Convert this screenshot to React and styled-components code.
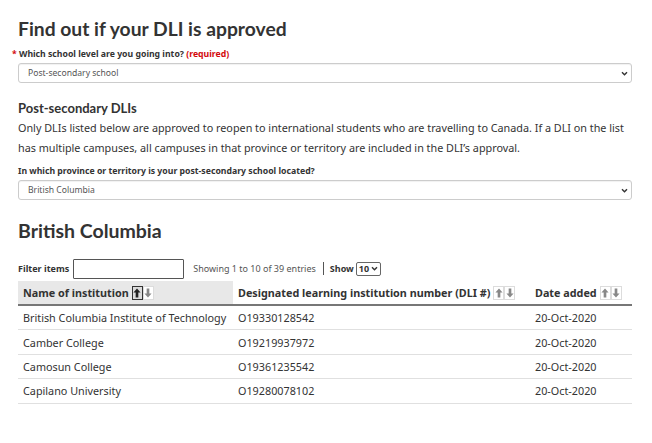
import React from "react";
import styled, { createGlobalStyle } from "styled-components";

const GlobalStyle = createGlobalStyle`
  body {
    margin: 0;
    background: #ffffff;
    font-family: "Noto Sans", "Open Sans", sans-serif;
    color: #333333;
  }
`;

const rows = [
  ["British Columbia Institute of Technology", "O19330128542", "20-Oct-2020"],
  ["Camber College", "O19219937972", "20-Oct-2020"],
  ["Camosun College", "O19361235542", "20-Oct-2020"],
  ["Capilano University", "O19280078102", "20-Oct-2020"],
];

function SortButtons({ active }) {
  return (
    <SortGroup>
      <SortBtn $active={active === "up"}>
        <svg width="8" height="10" viewBox="0 0 9 11">
          <path d="M4.5 0.5 L8.5 5 L6 5 L6 10.5 L3 10.5 L3 5 L0.5 5 Z" fill="currentColor" />
        </svg>
      </SortBtn>
      <SortBtn $active={active === "down"}>
        <svg width="8" height="10" viewBox="0 0 9 11">
          <path d="M4.5 10.5 L8.5 6 L6 6 L6 0.5 L3 0.5 L3 6 L0.5 6 Z" fill="currentColor" />
        </svg>
      </SortBtn>
    </SortGroup>
  );
}

function Chevron() {
  return (
    <svg width="7" height="5" viewBox="0 0 8 6">
      <path d="M1 1.5 L4 4.5 L7 1.5" stroke="#333" strokeWidth="1.7" fill="none" />
    </svg>
  );
}

export default function App() {
  return (
    <>
      <GlobalStyle />
      <Page>
        <Title>Find out if your DLI is approved</Title>
        <Label $required>
          <Req>*</Req> Which school level are you going into? <Req>(required)</Req>
        </Label>
        <Select>
          <span>Post-secondary school</span>
          <Chevron />
        </Select>

        <SubTitle>Post-secondary DLIs</SubTitle>
        <Para>
          Only DLIs listed below are approved to reopen to international students who are travelling to Canada. If a DLI on the list has multiple campuses, all campuses in that province or territory are included in the DLI’s approval.
        </Para>
        <Label>In which province or territory is your post-secondary school located?</Label>
        <Select>
          <span>British Columbia</span>
          <Chevron />
        </Select>

        <Province>British Columbia</Province>

        <Controls>
          <FilterLabel>Filter items</FilterLabel>
          <FilterInput />
          <Info>Showing 1 to 10 of 39 entries</Info>
          <Divider />
          <FilterLabel>Show</FilterLabel>
          <ShowSelect>
            10 <Chevron />
          </ShowSelect>
        </Controls>

        <Table>
          <thead>
            <tr>
              <Th $sorted $w="215px">
                <HeadInner>Name of institution <SortButtons active="up" /></HeadInner>
              </Th>
              <Th $w="297px">
                <HeadInner>Designated learning institution number (DLI #) <SortButtons /></HeadInner>
              </Th>
              <Th>
                <HeadInner>Date added <SortButtons /></HeadInner>
              </Th>
            </tr>
          </thead>
          <tbody>
            {rows.map((r) => (
              <tr key={r[1]}>
                {r.map((c) => (
                  <Td key={c}>{c}</Td>
                ))}
              </tr>
            ))}
          </tbody>
        </Table>
      </Page>
    </>
  );
}

const Page = styled.div`
  padding: 17px 20px 0 18px;
`;

const Title = styled.h1`
  font-family: Lato, sans-serif;
  font-weight: 700;
  font-size: 19.3px;
  line-height: 24px;
  color: #333;
  margin: 0 0 7px;
`;

const Label = styled.div`
  font-size: 8.7px;
  font-weight: 700;
  line-height: 12px;
  color: #333;
  margin-left: ${(p) => (p.$required ? "-6px" : "0")};
  margin-bottom: 3px;
`;

const Req = styled.span`
  color: #d3080c;
`;

const Select = styled.div`
  height: 20px;
  box-sizing: border-box;
  border: 1px solid #cccccc;
  border-radius: 3px;
  display: flex;
  align-items: center;
  justify-content: space-between;
  padding: 0 3px 0 9px;
  font-size: 8.6px;
  color: #555;
  box-shadow: inset 0 1px 1px rgba(0, 0, 0, 0.06);
`;

const SubTitle = styled.h3`
  font-family: Lato, sans-serif;
  font-weight: 700;
  font-size: 13px;
  line-height: 18px;
  color: #333;
  margin: 16px 0 1px;
`;

const Para = styled.p`
  font-size: 10.8px;
  line-height: 20px;
  margin: 0 0 7px;
  color: #333;
`;

const Province = styled.h2`
  font-family: Lato, sans-serif;
  font-weight: 700;
  font-size: 19.5px;
  line-height: 24px;
  color: #333;
  margin: 19px 0 15px;
`;

const Controls = styled.div`
  display: flex;
  align-items: center;
  height: 21px;
  margin-bottom: 2px;
`;

const FilterLabel = styled.span`
  font-size: 9px;
  font-weight: 700;
  color: #333;
`;

const FilterInput = styled.div`
  width: 111px;
  height: 20px;
  box-sizing: border-box;
  border: 1px solid #555;
  border-radius: 1px;
  margin: 0 9px 0 4px;
`;

const Info = styled.span`
  font-size: 9px;
  color: #555;
`;

const Divider = styled.span`
  width: 1px;
  height: 13px;
  background: #555;
  margin: 0 6px 0 7px;
`;

const ShowSelect = styled.div`
  display: flex;
  align-items: center;
  gap: 2px;
  height: 14px;
  box-sizing: border-box;
  margin-left: 2px;
  padding: 0 2px;
  border: 1px solid #666;
  border-radius: 2px;
  font-size: 9px;
  font-weight: 700;
  color: #333;
`;

const Table = styled.table`
  width: 100%;
  border-collapse: collapse;
  table-layout: fixed;
`;

const Th = styled.th`
  box-sizing: border-box;
  text-align: left;
  font-size: 10.8px;
  font-weight: 700;
  color: #333;
  height: 24px;
  padding: 0 5px;
  width: ${(p) => p.$w || "auto"};
  background: ${(p) => (p.$sorted ? "#e8e8e8" : "transparent")};
  border-bottom: 2px solid #777;
  white-space: nowrap;
`;

const HeadInner = styled.div`
  display: flex;
  align-items: center;
  gap: 3px;
`;

const SortGroup = styled.span`
  display: inline-flex;
`;

const SortBtn = styled.span`
  width: 11px;
  height: 14px;
  box-sizing: border-box;
  display: flex;
  align-items: center;
  justify-content: center;
  border: 1px solid ${(p) => (p.$active ? "#333" : "#dcdcdc")};
  background: ${(p) => (p.$active ? "#dcdcdc" : "#fff")};
  color: ${(p) => (p.$active ? "#222" : "#888")};
`;

const Td = styled.td`
  font-size: 10.8px;
  color: #333;
  height: 23.4px;
  padding: 0 5px;
  border-bottom: 1px solid #e0e0e0;
  white-space: nowrap;
`;
